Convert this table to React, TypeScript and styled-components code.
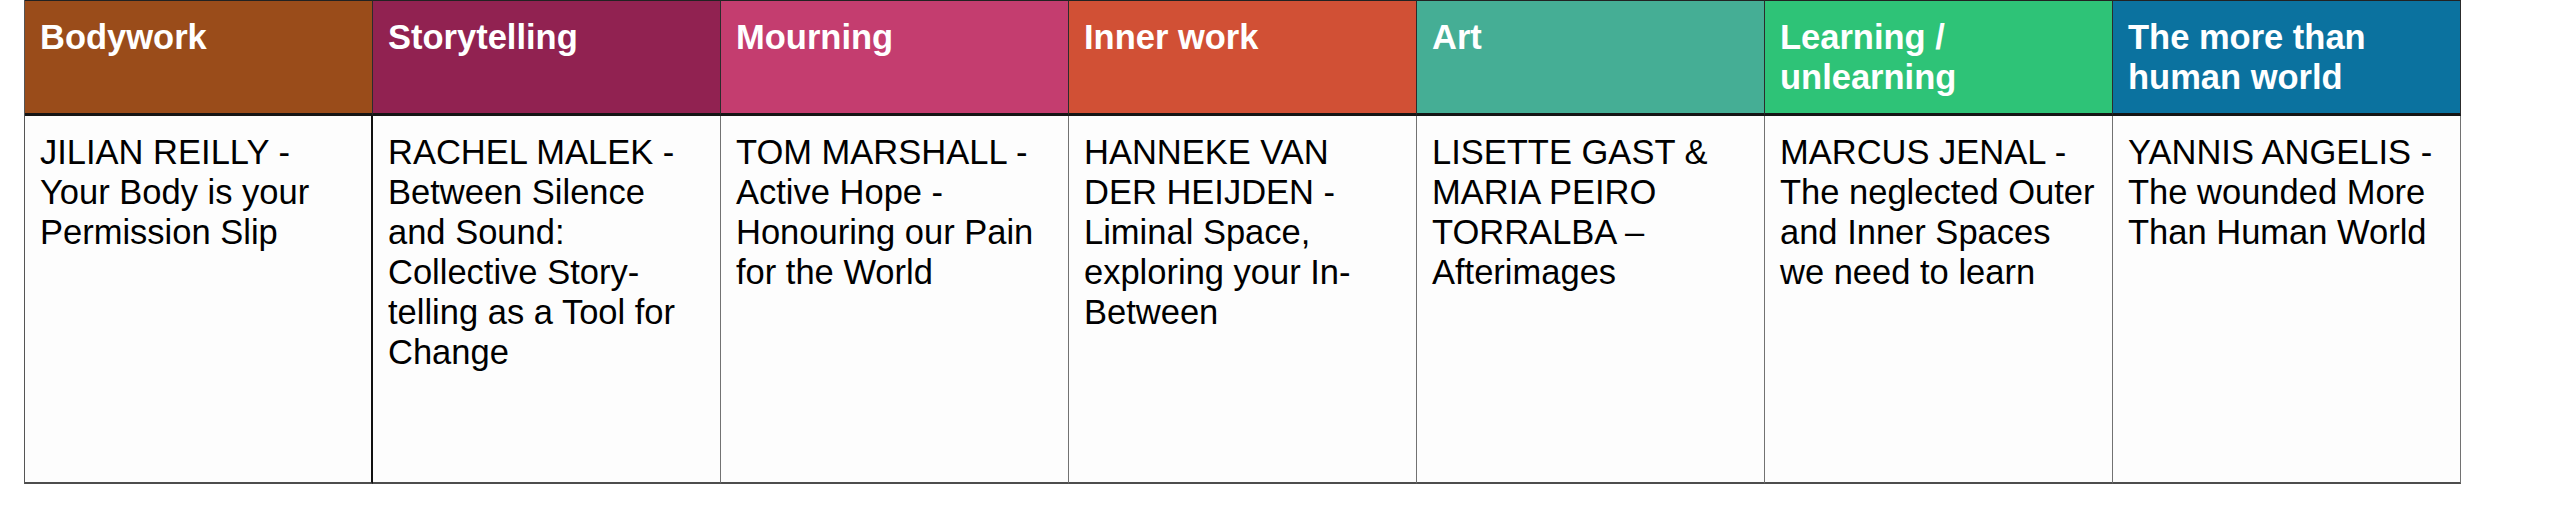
import React from 'react';
import styled, { createGlobalStyle } from 'styled-components';

const GlobalStyle = createGlobalStyle`
  html, body {
    margin: 0;
    padding: 0;
    background: #ffffff;
  }
  body {
    font-family: "Liberation Sans", Arial, sans-serif;
  }
`;

interface Track {
  title: string,
  color: string,
  talk: string,
};

const tracks: Track[] = [
  { title: 'Bodywork', color: '#9a4c1a', talk: 'JILIAN REILLY - Your Body is your Permission Slip' },
  { title: 'Storytelling', color: '#912251', talk: 'RACHEL MALEK - Between Silence and Sound: Collective Story-telling as a Tool for Change' },
  { title: 'Mourning', color: '#c43d6f', talk: 'TOM MARSHALL - Active Hope - Honouring our Pain for the World' },
  { title: 'Inner work', color: '#d15035', talk: 'HANNEKE VAN DER HEIJDEN - Liminal Space, exploring your In-Between' },
  { title: 'Art', color: '#45ae95', talk: 'LISETTE GAST & MARIA PEIRO TORRALBA – Afterimages' },
  { title: 'Learning / unlearning', color: '#2ec377', talk: 'MARCUS JENAL - The neglected Outer and Inner Spaces we need to learn' },
  { title: 'The more than human world', color: '#0b729f', talk: 'YANNIS ANGELIS - The wounded More Than Human World' },
];

const Page = styled.div`
  padding: 0 0 0 24px;
`;

const Schedule = styled.div`
  display: grid;
  grid-template-columns: repeat(7, 348px);
  grid-template-rows: 116px 368px;
  border-left: 1px solid #555555;
  width: max-content;
`;

const HeaderCell = styled.div<{ $bg: string }>`
  box-sizing: border-box;
  background: ${({ $bg }) => $bg};
  color: #ffffff;
  font-size: 34.5px;
  line-height: 40px;
  font-weight: 700;
  padding: 16px 10px 0 15px;
  border-top: 1px solid #222222;
  border-right: 1px solid #2c2c2c;
  border-bottom: 3px solid #151515;
`;

const TalkCell = styled.div<{ $strong?: boolean }>`
  box-sizing: border-box;
  background: #fdfdfd;
  color: #000000;
  font-size: 34.5px;
  line-height: 40px;
  padding: 16px 12px 0 15px;
  border-right: ${({ $strong }) => ($strong ? '2px solid #111111' : '1px solid #727272')};
  border-bottom: 2px solid #4d4d4d;
`;

export default function App() {
  return (
    <>
      <GlobalStyle />
      <Page>
        <Schedule>
          {tracks.map((t) => (
            <HeaderCell key={t.title} $bg={t.color}>{t.title}</HeaderCell>
          ))}
          {tracks.map((t, i) => (
            <TalkCell key={t.title} $strong={i === 0}>{t.talk}</TalkCell>
          ))}
        </Schedule>
      </Page>
    </>
  );
}
